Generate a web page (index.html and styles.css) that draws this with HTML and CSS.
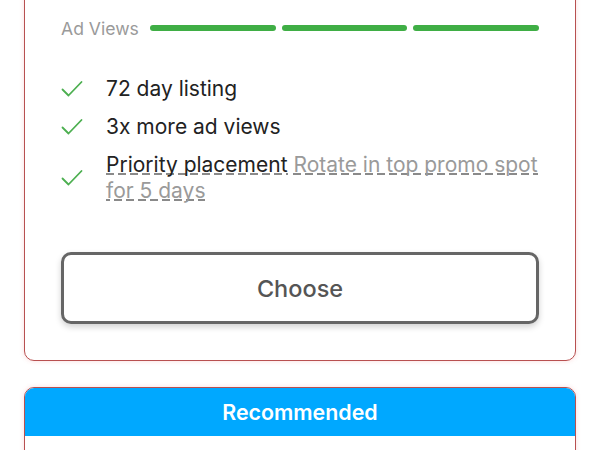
FILE: index.html
```html
<!DOCTYPE html>
<html>
<head>
<meta charset="utf-8">
<link rel="stylesheet" href="styles.css">
</head>
<body>
<div class="page">
  <div class="card plan">
    <div class="views">
      <span class="views-label">Ad Views</span>
      <div class="bars">
        <span class="bar"></span><span class="bar"></span><span class="bar"></span>
      </div>
    </div>
    <ul class="features">
      <li class="feature">
        <svg class="check" viewBox="0 0 22 18" width="22" height="18"><path d="M1.5 9.5 L7.5 15.5 L20.5 2" fill="none" stroke="#4caf50" stroke-width="1.8" stroke-linecap="round" stroke-linejoin="round"/></svg>
        <span class="feature-text">72 day listing</span>
      </li>
      <li class="feature">
        <svg class="check" viewBox="0 0 22 18" width="22" height="18"><path d="M1.5 9.5 L7.5 15.5 L20.5 2" fill="none" stroke="#4caf50" stroke-width="1.8" stroke-linecap="round" stroke-linejoin="round"/></svg>
        <span class="feature-text">3x more ad views</span>
      </li>
      <li class="feature">
        <svg class="check" viewBox="0 0 22 18" width="22" height="18"><path d="M1.5 9.5 L7.5 15.5 L20.5 2" fill="none" stroke="#4caf50" stroke-width="1.8" stroke-linecap="round" stroke-linejoin="round"/></svg>
        <span class="feature-text"><span class="dash">Priority placement</span> <span class="dash muted">Rotate in top promo spot for 5 days</span></span>
      </li>
    </ul>
    <button class="choose">Choose</button>
  </div>
  <div class="card recommended">
    <div class="rec-head">Recommended</div>
    <div class="rec-body"></div>
  </div>
</div>
</body>
</html>
```
FILE: styles.css
```css
html, body {
  margin: 0;
  padding: 0;
  background: #ffffff;
}
body {
  font-family: Inter, "Liberation Sans", sans-serif;
  color: #222;
}
.page {
  padding: 0 24px;
  display: flex;
  flex-direction: column;
  gap: 26px;
  margin-top: -20px;
}
.card {
  border: 1.5px solid #b85050;
  border-radius: 10px;
  box-shadow: 0 0 5px rgba(230, 90, 90, 0.22);
  background: #fff;
  overflow: hidden;
}
.plan {
  padding: 37px 36px 36px 36px;
}
.views {
  display: flex;
  align-items: center;
  gap: 11px;
  height: 20px;
}
.views-label {
  font-size: 17.6px;
  color: #9a9a9a;
  white-space: nowrap;
}
.bars {
  flex: 1;
  display: flex;
  gap: 6px;
}
.bar {
  flex: 1;
  height: 6px;
  border-radius: 3px;
  background: #3fae45;
}
.features {
  list-style: none;
  margin: 0;
  padding: 0;
  margin-top: 38px;
  display: flex;
  flex-direction: column;
  gap: 12px;
}
.feature {
  display: flex;
  align-items: center;
  gap: 23px;
  font-size: 21px;
  line-height: 26px;
}
.check {
  flex: none;
}
.feature-text {
  color: #222;
}
.dash {
  background-image: linear-gradient(to right, #8a8a8a 0, #8a8a8a 8px, transparent 8px, transparent 12px);
  background-repeat: repeat-x;
  background-size: 12px 1.5px;
  background-position: 0 calc(100% - 3px);
}
.muted {
  color: #9a9a9a;
}
.choose {
  display: block;
  width: 100%;
  margin-top: 48px;
  height: 72px;
  border: 3px solid #666;
  border-radius: 10px;
  background: #fff;
  box-shadow: 0 3px 6px rgba(0, 0, 0, 0.18);
  font-family: inherit;
  font-size: 23.5px;
  font-weight: 500;
  color: #555;
}
.rec-head {
  background: #00a8ff;
  color: #fff;
  font-weight: 600;
  font-size: 21.4px;
  text-align: center;
  height: 48px;
  line-height: 48px;
}
.rec-body {
  height: 60px;
}
```
